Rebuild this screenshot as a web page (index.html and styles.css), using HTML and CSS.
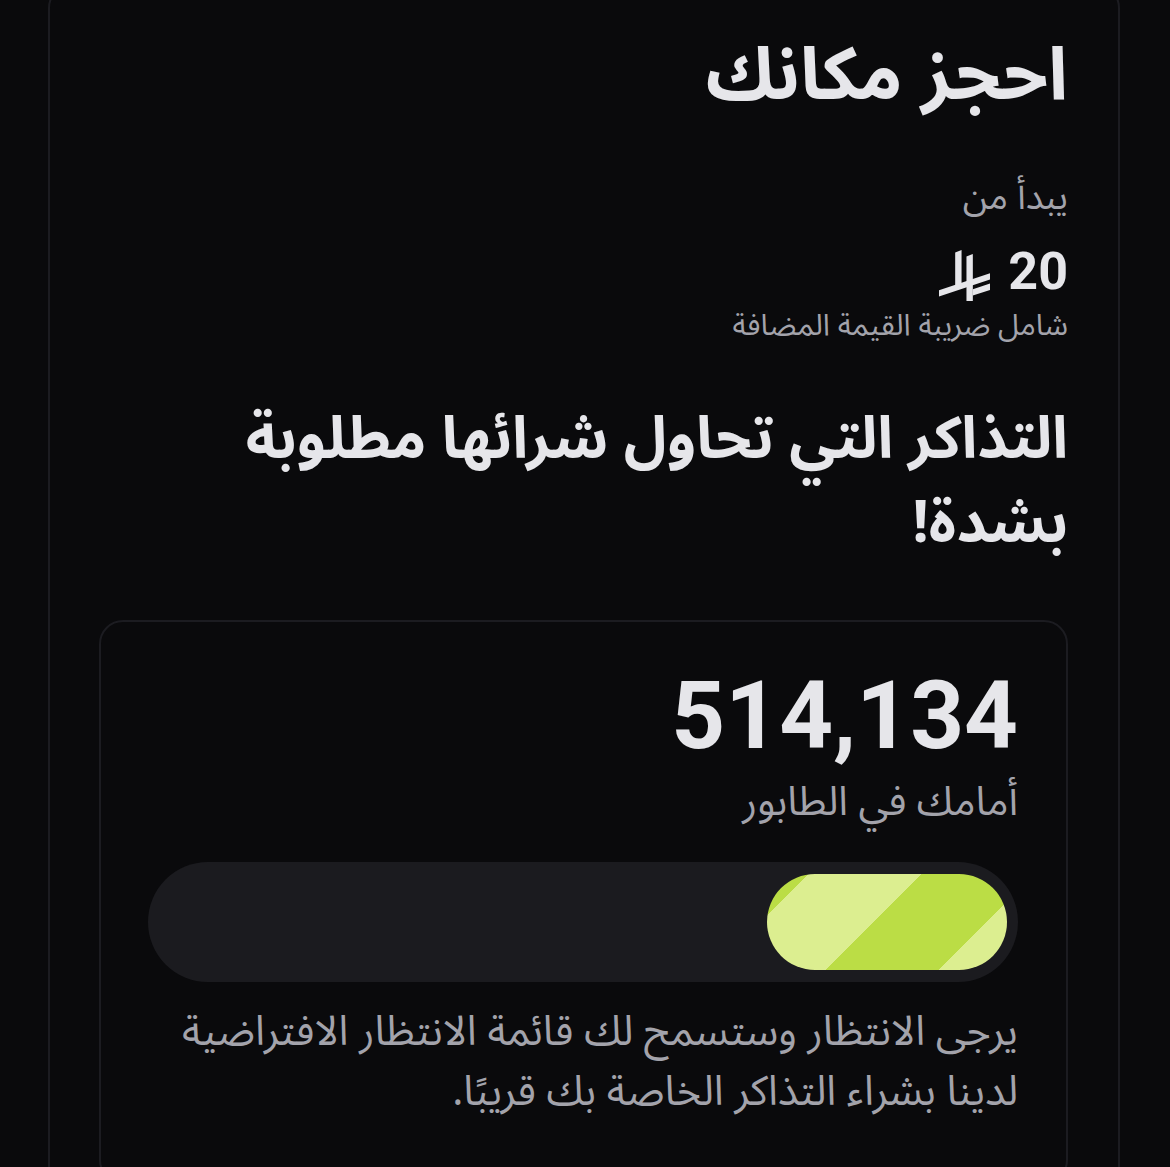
FILE: index.html
```html
<!DOCTYPE html>
<html lang="ar" dir="rtl">
<head>
<meta charset="utf-8">
<title>احجز مكانك</title>
<link rel="stylesheet" href="styles.css">
</head>
<body>
<main class="card">
  <h1 class="title">احجز مكانك</h1>
  <p class="from">يبدأ من</p>
  <div class="price">
    <span class="amount">20</span>
    <svg class="riyal" viewBox="0 0 52 52" aria-hidden="true">
      <path d="M16.5 2.5 L23 0 L23 36 L16.5 38 Z"/>
      <path d="M28 6.5 L34.5 4 L34.5 52 L28 52 Z"/>
      <path d="M0 41 L52 23.7 L52 30.2 L0 47.5 Z"/>
      <path d="M34.5 40 L52 34.2 L52 40.7 L34.5 46.5 Z"/>
    </svg>
  </div>
  <p class="vat">شامل ضريبة القيمة المضافة</p>
  <h2 class="notice">التذاكر التي تحاول شرائها مطلوبة<br>بشدة!</h2>
  <section class="queue">
    <div class="count">514,134</div>
    <p class="ahead">أمامك في الطابور</p>
    <div class="track">
      <div class="fill"></div>
    </div>
    <p class="desc">يرجى الانتظار وستسمح لك قائمة الانتظار الافتراضية لدينا بشراء التذاكر الخاصة بك قريبًا.</p>
  </section>
</main>
</body>
</html>
```
FILE: styles.css
```css
html, body {
  margin: 0;
  padding: 0;
  background: #0a0a0c;
}
body {
  overflow: hidden;
  height: 1167px;
  font-family: "Noto Sans Arabic", "Noto Naskh Arabic", "DejaVu Sans", sans-serif;
  color: #e6e6ea;
}
.card {
  margin: -16px 50px 0 48px;
  border: 2px solid #1c1c21;
  border-radius: 24px;
  padding: 42px 50px 0 49px;
  height: 1400px;
}
.title {
  margin: 0;
  font-size: 73px;
  font-weight: 700;
  line-height: 96px;
}
.from {
  margin: 50px 0 0;
  font-size: 36px;
  line-height: 48px;
  color: #a3a3ab;
}
.price {
  display: flex;
  align-items: center;
  gap: 18px;
  margin-top: 20px;
  height: 60px;
}
.amount {
  font-family: Roboto, "Liberation Sans", sans-serif;
  font-weight: 700;
  font-size: 52px;
  line-height: 60px;
}
.riyal {
  width: 51px;
  height: 51px;
  fill: #e6e6ea;
  margin-top: 6px;
}
.vat {
  margin: 4px 0 0;
  font-size: 30px;
  line-height: 40px;
  color: #a3a3ab;
}
.notice {
  margin: 52px 0 0;
  font-size: 58.5px;
  font-weight: 700;
  line-height: 84px;
}
.queue {
  margin-top: 54px;
  border: 2px solid #1c1c21;
  border-radius: 24px;
  padding: 39px 48px 60px 47px;
}
.count {
  font-family: Roboto, "Liberation Sans", sans-serif;
  font-weight: 700;
  font-size: 94px;
  line-height: 110px;
}
.ahead {
  margin: 6px 0 0;
  font-size: 40.5px;
  line-height: 50px;
  color: #a3a3ab;
}
.track {
  margin-top: 35px;
  height: 120px;
  border-radius: 60px;
  background: #1b1b1f;
  box-sizing: border-box;
  padding: 12px 11px;
  display: flex;
}
.fill {
  width: 240px;
  height: 96px;
  border-radius: 48px;
  background: repeating-linear-gradient(135deg, #bbdd45 -51px, #bbdd45 29px, #dcee90 29px, #dcee90 109px);
}
.desc {
  margin: 20px 0 0;
  font-size: 41.5px;
  line-height: 60px;
  color: #a3a3ab;
}
```
